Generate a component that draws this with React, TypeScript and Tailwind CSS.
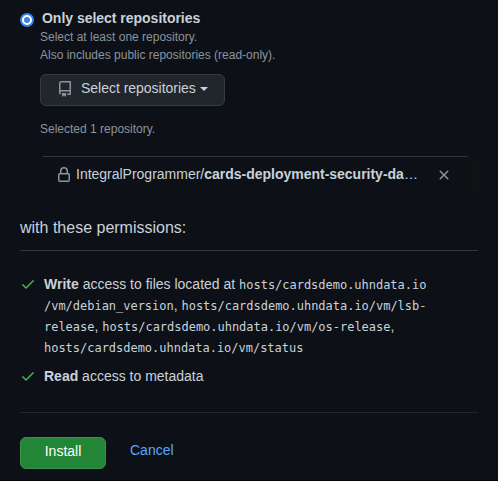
import type { ReactNode } from "react";

function Icon({ path, className }: { path: string; className: string }) {
  return (
    <svg viewBox="0 0 16 16" width="16" height="16" fill="currentColor" aria-hidden="true" className={`shrink-0 ${className}`}>
      <path fillRule="evenodd" d={path} />
    </svg>
  );
}

const REPO =
  "M2 2.5A2.5 2.5 0 014.5 0h8.75a.75.75 0 01.75.75v12.5a.75.75 0 01-.75.75h-2.5a.75.75 0 110-1.5h1.75v-2h-8a1 1 0 00-.714 1.7.75.75 0 01-1.072 1.05A2.495 2.495 0 012 11.5v-9zm10.5-1V9h-8c-.356 0-.694.074-1 .208V2.5a1 1 0 011-1h8zM5 12.25v3.25a.25.25 0 00.4.2l1.45-1.087a.25.25 0 01.3 0L8.6 15.7a.25.25 0 00.4-.2v-3.25a.25.25 0 00-.25-.25h-3.5a.25.25 0 00-.25.25z";
const LOCK =
  "M4 4v2h-.25A1.75 1.75 0 002 7.75v5.5c0 .966.784 1.75 1.75 1.75h8.5A1.75 1.75 0 0014 13.25v-5.5A1.75 1.75 0 0012.25 6H12V4a4 4 0 10-8 0zm6.5 2V4a2.5 2.5 0 10-5 0v2h5zM12 7.5h.25a.25.25 0 01.25.25v5.5a.25.25 0 01-.25.25h-8.5a.25.25 0 01-.25-.25v-5.5a.25.25 0 01.25-.25H12z";
const CLOSE =
  "M3.72 3.72a.75.75 0 011.06 0L8 6.94l3.22-3.22a.75.75 0 111.06 1.06L9.06 8l3.22 3.22a.75.75 0 11-1.06 1.06L8 9.06l-3.22 3.22a.75.75 0 01-1.06-1.06L6.94 8 3.72 4.78a.75.75 0 010-1.06z";
const CHECK =
  "M13.78 4.22a.75.75 0 010 1.06l-7.25 7.25a.75.75 0 01-1.06 0L2.22 9.28a.75.75 0 011.06-1.06L6 10.94l6.72-6.72a.75.75 0 011.06 0z";

function Code({ children }: { children: ReactNode }) {
  return <code className="font-['DejaVu_Sans_Mono',monospace] text-[12px] leading-none tracking-[-0.02px]">{children}</code>;
}

function Permission({ children }: { children: ReactNode }) {
  return (
    <li className="flex">
      <Icon path={CHECK} className="mt-[2px] mr-2 text-[#3fb950]" />
      <div className="whitespace-nowrap">{children}</div>
    </li>
  );
}

export default function App() {
  return (
    <main className="h-[481px] w-[498px] overflow-hidden border-b border-[#010409] bg-[#0d1117] px-5 pt-2 font-['Liberation_Sans',Arial,sans-serif] text-[14px] leading-[21px] text-[#c9d1d9]">
      <section className="h-[148px]">
        <label className="flex h-5">
          <span className="mt-[5px] mr-2 flex size-[14px] shrink-0 items-center justify-center rounded-full border-2 border-[#3584e4] bg-white">
            <span className="size-[6px] rounded-full bg-[#3584e4]" />
          </span>
          <b className="whitespace-nowrap tracking-[-0.02px]">Only select repositories</b>
        </label>
        <div className="pl-5 text-[12px] leading-[18px] text-[#8b949e]">
          <p>Select at least one repository.</p>
          <p>Also includes public repositories (read-only).</p>
          <button className="mt-[10px] flex h-8 w-[185px] items-center rounded-md border border-[#363b42] bg-[#21262d] pb-[2px] pl-4 text-[14px] text-[#c9d1d9]">
            <Icon path={REPO} className="mr-2 text-[#8b949e]" />
            <span className="pb-[2px] whitespace-nowrap tracking-[-0.02px]">Select repositories</span>
            <span className="ml-1 border-x-4 border-t-4 border-x-transparent border-t-[#c9d1d9]" />
          </button>
          <p className="mt-[14px]">Selected 1 repository.</p>
        </div>
      </section>

      <section className="ml-[23px] flex h-[38px] w-[437px]">
        <div className="flex w-[425px] items-start border-t border-[#30363d] pt-[7px]">
          <Icon path={LOCK} className="mt-[3px] ml-[13px] text-[#8b949e]" />
          <p className="ml-1 w-[343px] truncate tracking-[-0.01px]">
            IntegralProgrammer/<b>cards-deployment-security-da</b>…
          </p>
          <Icon path={CLOSE} className="mt-[3px] ml-[17px] text-[#8b949e]" />
        </div>
        <div className="w-3 bg-[#0f1115]" />
      </section>

      <h2 className="mt-[22px] h-[35px] w-[458px] border-b border-[#30363d] text-[16px] leading-6">with these permissions:</h2>

      <ul className="mt-[23px] flex w-[458px] flex-col gap-2">
        <Permission>
          <b>Write</b> access to files located at <Code>hosts/cardsdemo.uhndata.io</Code>
          <br />
          <Code>/vm/debian_version</Code>, <Code>hosts/cardsdemo.uhndata.io/vm/lsb-</Code>
          <br />
          <Code>release</Code>, <Code>hosts/cardsdemo.uhndata.io/vm/os-release</Code>,
          <br />
          <Code>hosts/cardsdemo.uhndata.io/vm/status</Code>
        </Permission>
        <Permission>
          <b>Read</b> access to metadata
        </Permission>
      </ul>

      <footer className="mt-[25px] flex w-[458px] border-t border-[#21262d] pt-6">
        <button className="h-8 w-[86px] rounded-md border border-[#389248] bg-[#238636] pb-[3px] text-white">Install</button>
        <a className="mt-[3px] ml-6 text-[#58a6ff]">Cancel</a>
      </footer>
    </main>
  );
}
